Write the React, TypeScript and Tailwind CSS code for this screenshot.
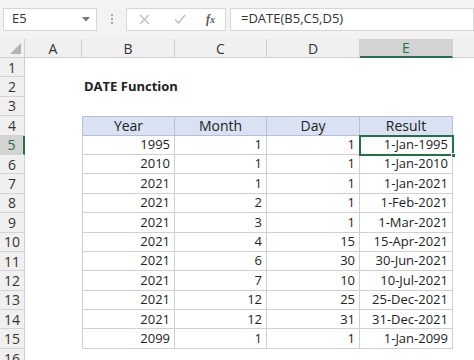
import React from 'react';

const rows: [number, number, number, string][] = [
  [1995, 1, 1, '1-Jan-1995'],
  [2010, 1, 1, '1-Jan-2010'],
  [2021, 1, 1, '1-Jan-2021'],
  [2021, 2, 1, '1-Feb-2021'],
  [2021, 3, 1, '1-Mar-2021'],
  [2021, 4, 15, '15-Apr-2021'],
  [2021, 6, 30, '30-Jun-2021'],
  [2021, 7, 10, '10-Jul-2021'],
  [2021, 12, 25, '25-Dec-2021'],
  [2021, 12, 31, '31-Dec-2021'],
  [2099, 1, 1, '1-Jan-2099'],
];

const cols = ['A', 'B', 'C', 'D', 'E'];

const RowHead = ({ n, active }: { n: number; active?: boolean }) => (
  <div
    className={`flex items-center justify-center text-[14px] border-b border-[#d4d4d4] ${
      active ? 'bg-[#d3d3d3] text-[#217346] border-r-2 border-r-[#217346]' : 'bg-[#f0f0f0] text-[#333] border-r border-r-[#cfcfcf]'
    }`}
  >
    {n}
  </div>
);

const Empty = () => <div className="bg-white" />;

export default function App() {
  return (
    <div className="w-[474px] h-[360px] overflow-hidden bg-white text-[13px] text-[#222]" style={{ fontFamily: '"Open Sans", "Liberation Sans", sans-serif' }}>
      {/* formula bar */}
      <div className="h-[39px] bg-[#f3f3f3] flex items-center pl-[3px] pb-[1px]">
        <div className="w-[94px] h-[23px] bg-white border border-[#d6d6d6] flex items-center justify-between pl-[8px] pr-[6px] text-[#333]">
          <span>E5</span>
          <svg width="8" height="5" viewBox="0 0 8 5"><path d="M0 0h8L4 4.5z" fill="#777" /></svg>
        </div>
        <div className="w-[29px] flex flex-col items-center gap-[2px]">
          <span className="w-[2px] h-[2px] bg-[#aaa]" />
          <span className="w-[2px] h-[2px] bg-[#aaa]" />
          <span className="w-[2px] h-[2px] bg-[#aaa]" />
        </div>
        <div className="w-[100px] h-[23px] bg-white border border-[#d6d6d6] flex items-center">
          <svg className="ml-[12px]" width="11" height="11" viewBox="0 0 11 11"><path d="M1 1l9 9M10 1l-9 9" stroke="#bdbdbd" strokeWidth="1.3" /></svg>
          <svg className="ml-[24px]" width="12" height="10" viewBox="0 0 12 10"><path d="M1 5.5l3.5 3.5L11 1" stroke="#bdbdbd" strokeWidth="1.4" fill="none" /></svg>
          <span className="ml-[20px] italic font-bold text-[12px] text-[#555]" style={{ fontFamily: '"Liberation Serif", serif' }}>f<span className="text-[10px]">x</span></span>
        </div>
        <div className="ml-[4px] flex-1 h-[23px] bg-white border border-[#d6d6d6] flex items-center pl-[10px] text-[#333]">
          =DATE(B5,C5,D5)
        </div>
      </div>

      {/* grid */}
      <div className="relative grid grid-cols-[25px_57px_93px_92px_93px_93px_1fr] grid-rows-[19px_repeat(16,19.4px)]">
        {/* column headers */}
        <div className="bg-[#f0f0f0] border-r border-b border-[#cfcfcf] flex items-end justify-end p-[3px]">
          <svg width="11" height="11" viewBox="0 0 11 11"><path d="M11 0v11H0z" fill="#b4b4b4" /></svg>
        </div>
        {cols.map((c) => (
          <div
            key={c}
            className={`flex items-center justify-center text-[14px] border-r border-[#cfcfcf] ${
              c === 'E' ? 'bg-[#d3d3d3] text-[#217346] border-b-2 border-b-[#217346]' : 'bg-[#f0f0f0] text-[#333] border-b border-b-[#cfcfcf]'
            }`}
          >
            {c}
          </div>
        ))}
        <div className="bg-[#f0f0f0] border-b border-[#cfcfcf]" />

        {/* rows 1-3 */}
        {[1, 2, 3].map((n) => (
          <React.Fragment key={n}>
            <RowHead n={n} />
            <Empty />
            {n === 2 ? (
              <div className="col-span-2 flex items-center pl-[2px] font-bold">DATE Function</div>
            ) : (
              <>
                <Empty />
                <Empty />
              </>
            )}
            <Empty />
            <Empty />
            <Empty />
          </React.Fragment>
        ))}

        {/* row 4 header */}
        <RowHead n={4} />
        <Empty />
        {['Year', 'Month', 'Day', 'Result'].map((h, i) => (
          <div
            key={h}
            className={`bg-[#d9e1f2] text-[14px] flex items-center justify-center border-t border-b border-r border-[#b4c0d6] ${i === 0 ? 'border-l' : ''}`}
          >
            {h}
          </div>
        ))}
        <Empty />

        {rows.map((r, idx) => (
          <React.Fragment key={idx}>
            <RowHead n={idx + 5} active={idx === 0} />
            <Empty />
            {r.map((v, i) => (
              <div
                key={i}
                className={`flex items-center justify-end pr-[4px] border-b border-r border-[#d0d0d0] ${i === 0 ? 'border-l' : ''}`}
              >
                {v}
              </div>
            ))}
            <Empty />
          </React.Fragment>
        ))}

        <RowHead n={16} />

        {/* active cell E5 */}
        <div className="absolute left-[359px] top-[96px] w-[95px] h-[21px] border-2 border-[#217346] pointer-events-none">
          <span className="absolute -right-[4px] -bottom-[4px] w-[5px] h-[5px] bg-[#217346] border border-white" />
        </div>
      </div>
    </div>
  );
}
